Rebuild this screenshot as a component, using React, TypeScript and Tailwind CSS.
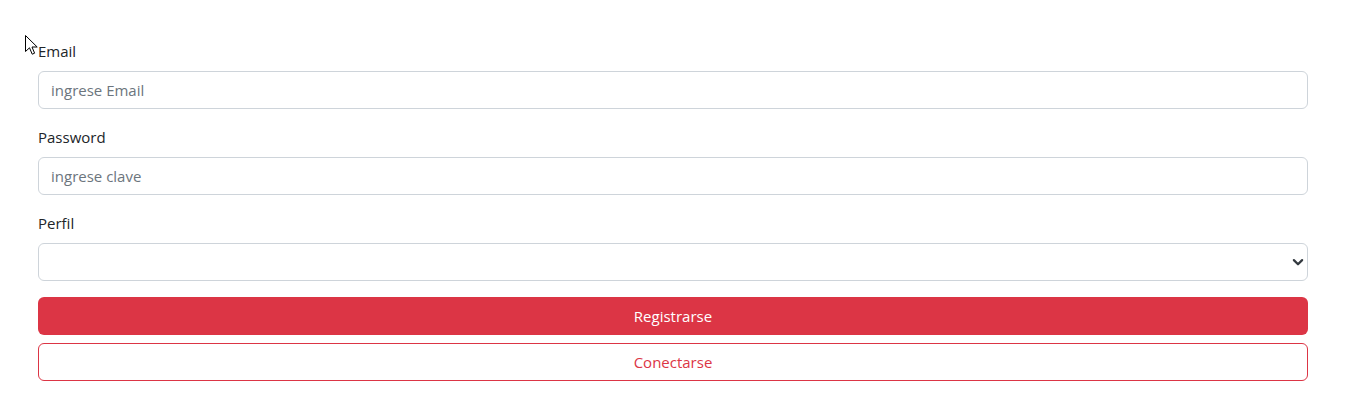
import { useState } from "react"

function Cursor() {
  return (
    <svg className="absolute left-[25px] top-[35px]" width="13" height="21" viewBox="0 0 13 21">
      <path d="M0.5 0.5 L0.5 16.5 L4.5 12.8 L7.2 19.2 L9.6 18.2 L7 12 L12.2 12 Z" fill="#fff" stroke="#000" strokeWidth="1" strokeLinejoin="miter" />
    </svg>
  )
}

export default function App() {
  const [perfil, setPerfil] = useState("")
  return (
    <div className="relative min-h-[409px] bg-white font-['Open_Sans',sans-serif] text-[#212529]">
      <Cursor />
      <form className="w-[1270px] ml-[38px] pt-[39px]" onSubmit={(e) => e.preventDefault()}>
        <div className="mb-4">
          <label className="block mb-2 text-[15px] leading-6">Email</label>
          <input
            type="email"
            placeholder="ingrese Email"
            className="block w-full h-[38px] px-3 border border-[#ced4da] rounded-md text-[15px] placeholder:text-[#6c757d] outline-none"
          />
        </div>
        <div className="mb-4">
          <label className="block mb-2 text-[15px] leading-6">Password</label>
          <input
            type="password"
            placeholder="ingrese clave"
            className="block w-full h-[38px] px-3 border border-[#ced4da] rounded-md text-[15px] placeholder:text-[#6c757d] outline-none"
          />
        </div>
        <div className="mb-4">
          <label className="block mb-2 text-[15px] leading-6">Perfil</label>
          <div className="relative">
            <select
              value={perfil}
              onChange={(e) => setPerfil(e.target.value)}
              className="block w-full h-[38px] px-3 border border-[#ced4da] rounded-md text-[15px] bg-white appearance-none outline-none"
            >
              <option value=""></option>
              <option value="admin">Administrador</option>
              <option value="user">Usuario</option>
            </select>
            <svg className="absolute right-[4px] top-[13px] pointer-events-none" width="12" height="12" viewBox="0 0 16 16">
              <path d="m2.5 5.5 5.5 5.5 5.5-5.5" fill="none" stroke="#343a40" strokeWidth="3" strokeLinecap="round" strokeLinejoin="round" />
            </svg>
          </div>
        </div>
        <button type="submit" className="block w-full h-[38px] rounded-md bg-[#dc3545] text-white text-[15px]">
          Registrarse
        </button>
        <button type="button" className="block w-full h-[38px] mt-2 rounded-md border border-[#dc3545] text-[#dc3545] text-[15px] bg-white">
          Conectarse
        </button>
      </form>
    </div>
  )
}
